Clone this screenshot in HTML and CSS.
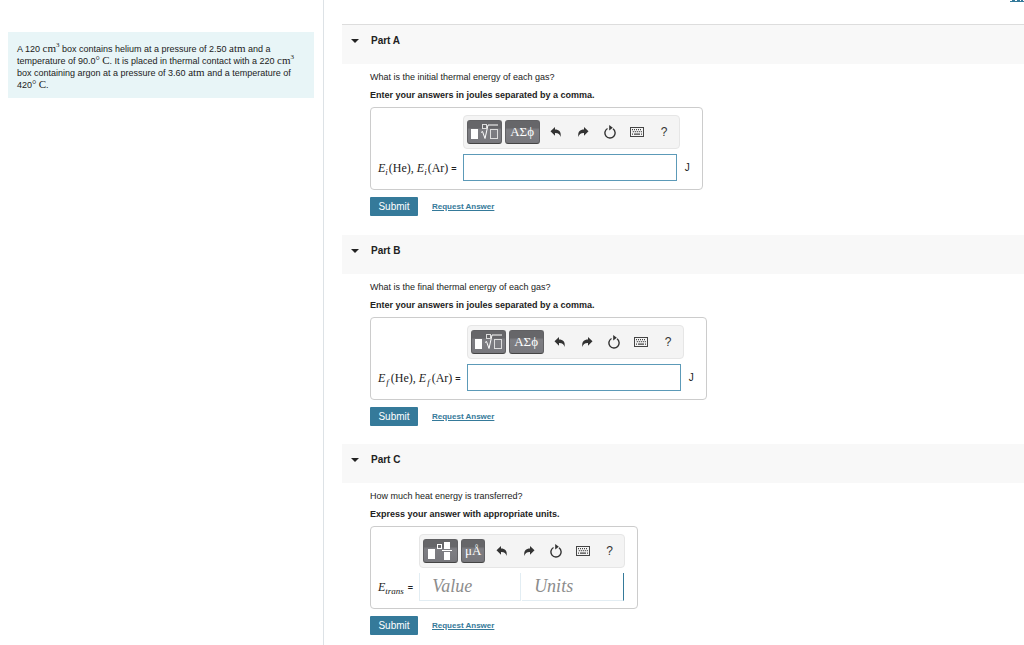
FILE: index.html
```html
<!DOCTYPE html>
<html lang="en">
<head>
<meta charset="utf-8">
<title>Thermal energy problem</title>
<link rel="stylesheet" href="styles.css">
</head>
<body>
<svg class="defs" aria-hidden="true">
  <symbol id="undo" viewBox="0 0 12 12"><path d="M5 1v2.600c4 0 6.500 2 5.600 7.400-.8-2.700-2.200-4-5.600-3.900V9.800L.5 5.300z" fill="#333"/></symbol>
  <symbol id="redo" viewBox="0 0 12 12"><path d="M7 1v2.600c-4 0-6.500 2-5.600 7.400.8-2.700 2.200-4 5.600-3.900V9.800l4.500-4.500z" fill="#333"/></symbol>
  <symbol id="reset" viewBox="0 0 12 14"><path d="M3.500 3.500A5.100 5.100 0 1 0 9 3.800" fill="none" stroke="#333" stroke-width="1.400"/><path d="M5.200 0l3.600 2.700-3.600 2.700z" fill="#333"/></symbol>
  <symbol id="keyboard" viewBox="0 0 14 10"><rect x=".5" y=".5" width="13" height="9" fill="#f4f4f4" stroke="#444"/><path d="M2 2.700h10M2.800 4.700h9" stroke="#444" stroke-width="1.200" stroke-dasharray="1 1"/><path d="M2 7.200h1M4 7.200h6M11 7.200h1" stroke="#444" stroke-width="1.200"/></symbol>
  <symbol id="root" viewBox="0 0 29 18"><path d="M1 6h7v10H1z" fill="#fff"/><path d="M11 9.500l1.500-1 2.500 7 3-13.500H28" fill="none" stroke="#fff"/><rect x="12.500" y="1.500" width="4" height="4" fill="none" stroke="#ddd"/><rect x="20.500" y="6.500" width="7" height="9" fill="none" stroke="#ddd"/></symbol>
  <symbol id="fraction" viewBox="0 0 29 18"><path d="M2 7h7v10H2zM18 0h6v7h-6zM18 10h6v8h-6zM16 8h10v1H16z" fill="#fff"/><rect x="11.500" y="2.500" width="4" height="4" fill="none" stroke="#fff"/></symbol>
</svg>
<div class="page">
  <aside class="sidebar">
    <p class="problem">A 120 <span class="unit">cm<sup>3</sup></span> box contains helium at a pressure of 2.50 <span class="unit">atm</span> and a temperature of 90.0<span class="unit">°&#8201;C</span>. It is placed in thermal contact with a 220 <span class="unit">cm<sup>3</sup></span> box containing argon at a pressure of 3.60 <span class="unit">atm</span> and a temperature of 420<span class="unit">°&#8201;C</span>.</p>
  </aside>
  <main class="parts">
    <nav class="topbar"><a class="toplink" href="#" aria-label="Constants"><svg width="14" height="2" viewBox="0 0 14 2"><path d="M0 1.500h14M2 .5h3M7 .5h3M11 .5h2" stroke="#357a9a"/></svg></a></nav>

    <section class="part">
      <header class="part-head"><button class="toggle" aria-label="Collapse Part A"></button><h2>Part A</h2></header>
      <div class="body">
        <p>What is the initial thermal energy of each gas?</p>
        <p class="instruction">Enter your answers in joules separated by a comma.</p>
        <div class="answer">
          <div class="toolbar">
            <button class="key" aria-label="Templates"><svg class="template"><use href="#root"/></svg></button>
            <button class="key">ΑΣϕ</button>
            <span class="tools">
              <button aria-label="Undo"><svg class="arrow"><use href="#undo"/></svg></button>
              <button aria-label="Redo"><svg class="arrow"><use href="#redo"/></svg></button>
              <button aria-label="Reset"><svg class="reset"><use href="#reset"/></svg></button>
              <button aria-label="Keyboard shortcuts"><svg class="keyboard"><use href="#keyboard"/></svg></button>
              <button>?</button>
            </span>
          </div>
          <label class="math" for="a"><i>E<sub>i</sub></i>(He), <i>E<sub>i</sub></i>(Ar) <b>=</b></label>
          <input class="field" id="a" type="text">
          <span class="suffix">J</span>
        </div>
        <div class="actions"><button class="submit">Submit</button><a href="#">Request Answer</a></div>
      </div>
    </section>

    <section class="part">
      <header class="part-head"><button class="toggle" aria-label="Collapse Part B"></button><h2>Part B</h2></header>
      <div class="body">
        <p>What is the final thermal energy of each gas?</p>
        <p class="instruction">Enter your answers in joules separated by a comma.</p>
        <div class="answer">
          <div class="toolbar">
            <button class="key" aria-label="Templates"><svg class="template"><use href="#root"/></svg></button>
            <button class="key">ΑΣϕ</button>
            <span class="tools">
              <button aria-label="Undo"><svg class="arrow"><use href="#undo"/></svg></button>
              <button aria-label="Redo"><svg class="arrow"><use href="#redo"/></svg></button>
              <button aria-label="Reset"><svg class="reset"><use href="#reset"/></svg></button>
              <button aria-label="Keyboard shortcuts"><svg class="keyboard"><use href="#keyboard"/></svg></button>
              <button>?</button>
            </span>
          </div>
          <label class="math wide" for="b"><i>E<sub>f</sub></i>(He), <i>E<sub>f</sub></i>(Ar) <b>=</b></label>
          <input class="field" id="b" type="text">
          <span class="suffix">J</span>
        </div>
        <div class="actions"><button class="submit">Submit</button><a href="#">Request Answer</a></div>
      </div>
    </section>

    <section class="part">
      <header class="part-head"><button class="toggle" aria-label="Collapse Part C"></button><h2>Part C</h2></header>
      <div class="body">
        <p>How much heat energy is transferred?</p>
        <p class="instruction">Express your answer with appropriate units.</p>
        <div class="answer units">
          <div class="toolbar">
            <button class="key" aria-label="Templates"><svg class="template"><use href="#fraction"/></svg></button>
            <button class="key narrow">μÅ</button>
            <span class="tools">
              <button aria-label="Undo"><svg class="arrow"><use href="#undo"/></svg></button>
              <button aria-label="Redo"><svg class="arrow"><use href="#redo"/></svg></button>
              <button aria-label="Reset"><svg class="reset"><use href="#reset"/></svg></button>
              <button aria-label="Keyboard shortcuts"><svg class="keyboard"><use href="#keyboard"/></svg></button>
              <button>?</button>
            </span>
          </div>
          <label class="math" for="c"><i>E<sub>trans</sub></i> <b>=</b></label>
          <div class="pair">
            <input id="c" type="text" placeholder="Value">
            <input type="text" placeholder="Units" aria-label="Units">
          </div>
        </div>
        <div class="actions"><button class="submit">Submit</button><a href="#">Request Answer</a></div>
      </div>
    </section>
  </main>
</div>
</body>
</html>
```
FILE: styles.css
```css
* { box-sizing: border-box; }
body {
  margin: 0;
  font: 9px/12px "Liberation Sans", Arial, sans-serif;
  color: #222;
  background: #fff;
}
button, input { font: inherit; color: inherit; padding: 0; border: 0; margin: 0; }
svg { display: block; }
.defs { display: none; }
.page { display: flex; min-height: 100vh; }
.sidebar { flex: 0 0 324px; padding: 32px 9px 0 8px; border-right: 1px solid #dde2e6; }
.problem { margin: 0; padding: 11px 9px 7px; background: #e8f5f7; }
.unit { font-family: "Liberation Serif", serif; font-size: 11px; line-height: 8px; }
.unit sup { font-size: 7px; line-height: 0; }
.parts { flex: 1; min-width: 0; padding-left: 18px; }
.topbar { display: flex; justify-content: flex-end; height: 24px; }
.part-head {
  display: flex;
  align-items: flex-start;
  height: 39px;
  padding: 10px 9px;
  background: #f8f8f8;
}
.part:first-of-type .part-head { border-top: 1px solid #ddd; height: 40px; }
.toggle { width: 8px; height: 12px; background: none; display: grid; place-items: center; }
.toggle::before { content: ""; border: 4px solid transparent; border-top-color: #222; border-bottom: 0; }
.part-head h2 { margin: 0 0 0 12px; font-size: 10px; line-height: 12px; }
.body { padding: 7px 0 19px 28px; }
.part + .part .body { padding-bottom: 18px; }
.body p { margin: 0 0 6px; }
.answer {
  display: grid;
  grid-template-columns: auto auto auto;
  justify-content: start;
  align-items: center;
  width: fit-content;
  height: 83px;
  padding: 7px 12px 8px 7px;
  row-gap: 5px;
  border: 1px solid #ccc;
  border-radius: 4px;
}
.body .instruction { font-weight: bold; }
.toolbar {
  grid-column: 2 / 4;
  display: flex;
  align-items: center;
  gap: 3px;
  width: fit-content;
  height: 34px;
  padding: 0 1px 0 3px;
  border: 1px solid #e6e6e6;
  border-radius: 4px;
  background: #f4f4f4;
}
.key {
  display: grid;
  place-items: center;
  width: 35px;
  height: 24px;
  color: #fff;
  font: 13px/20px "Liberation Serif", serif;
  background: linear-gradient(#666669 30%, #7e7e83 40%, #77777c);
  border: 1px solid #606063;
  border-bottom-color: #444;
  border-radius: 3px;
}
.key.narrow { width: 24px; }
.template { width: 29px; height: 18px; }
.tools { display: flex; }
.tools button { display: grid; place-items: center; width: 27px; height: 24px; background: none; color: #333; font-size: 12px; }
.arrow { width: 12px; height: 12px; }
.reset { width: 12px; height: 14px; }
.keyboard { width: 14px; height: 10px; }
.math { grid-row: 2; font: 12px/16px "Liberation Serif", serif; margin-right: 6px; white-space: nowrap; }
.math sub { font-size: 9px; line-height: 0; padding-right: 1px; }
.math.wide sub { padding: 0 2px 0 1px; }
.math b { font: bold 9px "Liberation Sans", sans-serif; }
.field { width: 214px; height: 27px; padding: 0 6px; background: #fff; border: 1px solid #5c9ab8; }
.suffix { margin-left: 8px; font-size: 10px; }
.units { grid-template-columns: auto auto; }
.units .toolbar { grid-column: 2; }
.pair { display: grid; grid-template-columns: auto auto; }
.pair input {
  min-width: 0;
  width: 102px;
  height: 28px;
  padding: 0 12px;
  font: italic 18px/24px "Liberation Serif", serif;
  border: 1px solid #e2edf3;
  border-top: 0;
}
.pair input:last-child { border-right-color: #357a9a; border-left: 0; }
.pair input::placeholder { color: #8c8c8c; opacity: 1; }
.actions { display: flex; align-items: center; gap: 14px; margin-top: 7px; }
.submit { width: 48px; height: 19px; font-size: 10px; font-weight: normal; color: #fff; background: #357a9a; border-radius: 1px; -webkit-text-stroke: 0; }
.actions a { font-weight: bold; font-size: 8px; color: #357a9a; }
```
